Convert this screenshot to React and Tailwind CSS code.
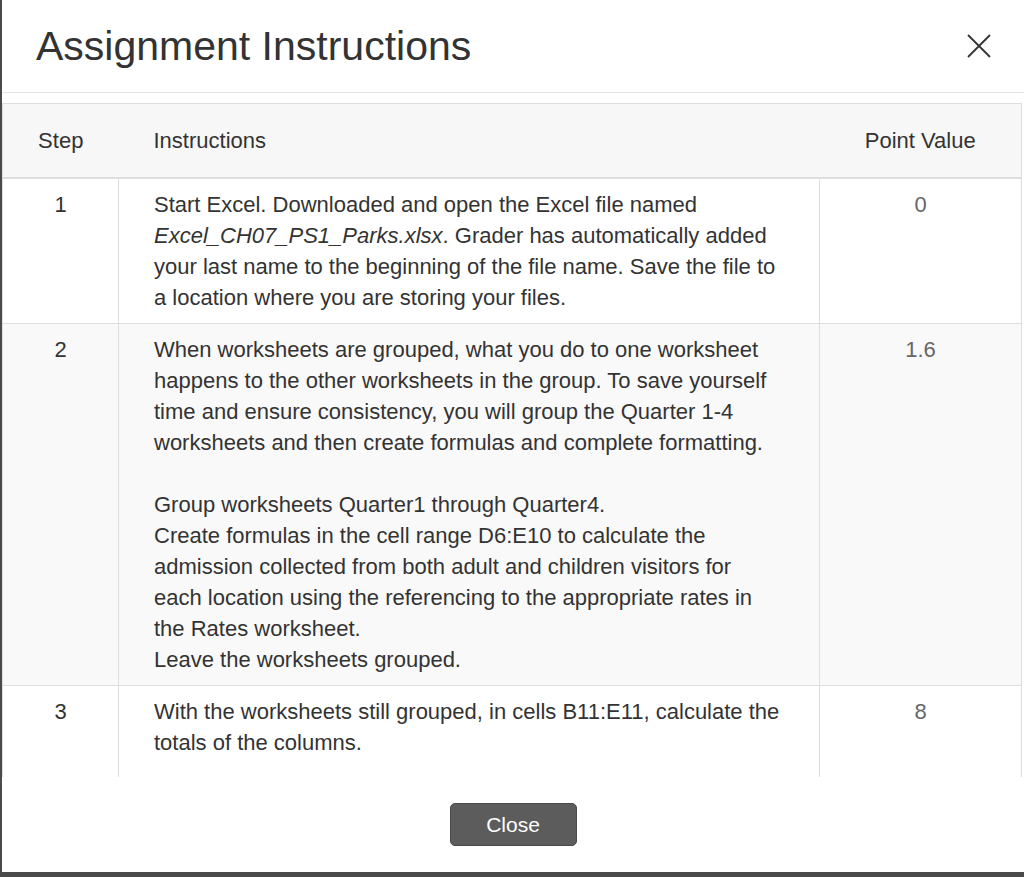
import React from 'react';

const steps = [
  {
    step: '1',
    points: '0',
    body: (
      <p>
        Start Excel. Downloaded and open the Excel file named <em>Excel_CH07_PS1_Parks.xlsx</em>. Grader has
        automatically added your last name to the beginning of the file name. Save the file to a location where you
        are storing your files.
      </p>
    ),
  },
  {
    step: '2',
    points: '1.6',
    body: (
      <>
        <p>
          When worksheets are grouped, what you do to one worksheet happens to the other worksheets in the group. To
          save yourself time and ensure consistency, you will group the Quarter 1-4 worksheets and then create
          formulas and complete formatting.
        </p>
        <p className="mt-[31px]">Group worksheets Quarter1 through Quarter4.</p>
        <p>
          Create formulas in the cell range D6:E10 to calculate the admission collected from both adult and children
          visitors for each location using the referencing to the appropriate rates in the Rates worksheet.
        </p>
        <p>Leave the worksheets grouped.</p>
      </>
    ),
  },
  {
    step: '3',
    points: '8',
    body: <p className="pb-[40px]">With the worksheets still grouped, in cells B11:E11, calculate the totals of the columns.</p>,
  },
];

export default function App() {
  return (
    <div className="h-[877px] overflow-hidden bg-[#4a4a4a] pl-[2px] font-['Liberation_Sans',Arial,sans-serif] text-[#333]">
      <div className="flex h-[872px] flex-col bg-white">
        {/* Header */}
        <div className="flex h-[93px] shrink-0 items-center justify-between border-b border-[#e5e5e5] pl-[34px] pr-[33px]">
          <h2 className="text-[41px] leading-none">Assignment Instructions</h2>
          <button className="text-[#333]" aria-label="Close">
            <svg width="24" height="24" viewBox="0 0 24 24" fill="none" stroke="currentColor" strokeWidth="1.8">
              <path d="M1 1 L23 23 M23 1 L1 23" />
            </svg>
          </button>
        </div>

        <div className="h-[684px] shrink-0 overflow-hidden pt-[10px] pr-[2px]">
          <table className="w-full border-collapse border border-[#dedede] text-[22px] leading-[31px]">
            <thead>
              <tr className="bg-[#f7f7f7]">
                <th className="w-[116px] border-b-2 border-[#dedede] py-[21px] text-center font-normal">Step</th>
                <th className="border-b-2 border-[#dedede] py-[21px] pl-[35px] text-left font-normal">Instructions</th>
                <th className="w-[202px] border-b-2 border-[#dedede] py-[21px] text-center font-normal">Point Value</th>
              </tr>
            </thead>
            <tbody>
              {steps.map((s, i) => (
                <tr key={s.step} className={i % 2 === 1 ? 'bg-[#f9f9f9]' : 'bg-white'}>
                  <td className="border border-[#dedede] py-[10px] text-center align-top">{s.step}</td>
                  <td className="border border-[#dedede] py-[10px] pl-[35px] pr-[35px] align-top">{s.body}</td>
                  <td className="border border-[#dedede] py-[10px] text-center align-top text-[#666]">{s.points}</td>
                </tr>
              ))}
            </tbody>
          </table>
        </div>

        {/* Footer */}
        <div className="flex flex-1 items-center justify-center">
          <button className="h-[43px] w-[127px] rounded-[5px] border border-[#4a4a4a] bg-[#5c5c5c] text-[21px] text-white">
            Close
          </button>
        </div>
      </div>
    </div>
  );
}
